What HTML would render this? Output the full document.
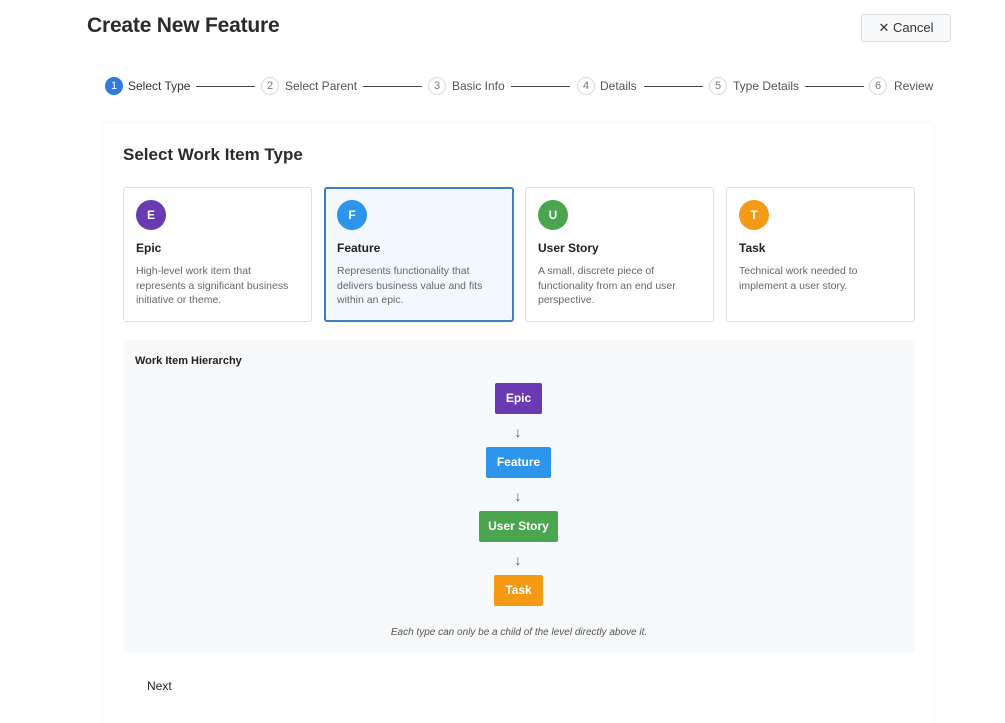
<!DOCTYPE html>
<html><head><meta charset="utf-8"><style>
*{box-sizing:border-box;margin:0;padding:0}
body{width:1005px;height:713px;background:#fff;font-family:"Liberation Sans",sans-serif;color:#333;position:relative;overflow:hidden}
.a{position:absolute}
h1{position:absolute;left:87px;top:14px;font-size:21px;font-weight:bold;color:#2b2b2b;letter-spacing:-0.2px}
.cancel{left:861px;top:14px;width:90px;height:28px;border:1px solid #d8dbe0;border-radius:3px;background:#f8f9fa;font-size:13px;color:#333;line-height:26px;text-align:center}
.st{font-size:12px;color:#555;top:79px;line-height:14px}
.c{position:absolute;top:77px;width:18px;height:18px;border-radius:50%;border:1px solid #ddd;font-size:11px;color:#777;text-align:center;line-height:16px;background:#fff}
.ln{position:absolute;top:86px;height:1px;background:#444}
.panel{left:104px;top:123px;width:830px;height:600px;background:#fff;box-shadow:0 0 3px rgba(0,0,0,0.06)}
.card{position:absolute;top:187px;width:189px;height:135px;border:1px solid #dcdfe3;border-radius:3px;background:#fff;padding:0 12px}
.card .i{position:absolute;left:12px;top:12px;width:30px;height:30px;border-radius:50%;color:#fff;font-size:12px;font-weight:bold;text-align:center;line-height:30px}
.card b{position:absolute;left:12px;top:53px;font-size:12px;color:#222}
.card p{position:absolute;left:12px;top:76px;width:160px;font-size:10.5px;line-height:14.5px;color:#666}
.hb{left:123px;top:340px;width:792px;height:313px;background:#f8f9fa;border-radius:3px}
.bx{position:absolute;height:31px;color:#fff;font-size:12px;font-weight:bold;text-align:center;line-height:31px;border-radius:2px}
.ar{position:absolute;left:512px;font-size:14px;color:#555;width:12px;text-align:center}
</style></head><body>
<h1>Create New Feature</h1>
<div class="a cancel">✕ Cancel</div>

<div class="c" style="left:105px;background:#2d7be0;border-color:#2d7be0;color:#fff">1</div>
<div class="a st" style="left:128px;color:#333">Select Type</div>
<div class="ln" style="left:196px;width:59px"></div>
<div class="c" style="left:261px">2</div>
<div class="a st" style="left:285px">Select Parent</div>
<div class="ln" style="left:363px;width:59px"></div>
<div class="c" style="left:428px">3</div>
<div class="a st" style="left:452px">Basic Info</div>
<div class="ln" style="left:511px;width:59px"></div>
<div class="c" style="left:577px">4</div>
<div class="a st" style="left:600px">Details</div>
<div class="ln" style="left:644px;width:59px"></div>
<div class="c" style="left:709px">5</div>
<div class="a st" style="left:733px">Type Details</div>
<div class="ln" style="left:805px;width:59px"></div>
<div class="c" style="left:869px">6</div>
<div class="a st" style="left:894px">Review</div>

<div class="a panel"></div>
<div class="a" style="left:123px;top:145px;font-size:17px;font-weight:bold;color:#2b2b2b">Select Work Item Type</div>

<div class="card" style="left:123px"><div class="i" style="background:#6a3ab2">E</div><b>Epic</b><p>High-level work item that represents a significant business initiative or theme.</p></div>
<div class="card" style="left:324px;width:190px;border:2px solid #3d7fc1;background:#f3f8fd"><div class="i" style="background:#2d95ec;left:11px;top:11px">F</div><b style="left:11px;top:52px">Feature</b><p style="left:11px;top:75px">Represents functionality that delivers business value and fits within an epic.</p></div>
<div class="card" style="left:525px"><div class="i" style="background:#4aa54e">U</div><b>User Story</b><p>A small, discrete piece of functionality from an end user perspective.</p></div>
<div class="card" style="left:726px"><div class="i" style="background:#f49a14">T</div><b>Task</b><p>Technical work needed to implement a user story.</p></div>

<div class="a hb"></div>
<div class="a" style="left:135px;top:355px;font-size:11px;font-weight:bold;color:#222">Work Item Hierarchy</div>
<div class="bx" style="left:495px;top:383px;width:47px;background:#6a3ab2">Epic</div>
<div class="ar" style="top:424px">↓</div>
<div class="bx" style="left:486px;top:447px;width:65px;background:#2d95ec">Feature</div>
<div class="ar" style="top:488px">↓</div>
<div class="bx" style="left:479px;top:511px;width:79px;background:#4aa54e">User Story</div>
<div class="ar" style="top:552px">↓</div>
<div class="bx" style="left:494px;top:575px;width:49px;background:#f49a14">Task</div>
<div class="a" style="left:123px;width:792px;top:627px;text-align:center;font-size:10px;font-style:italic;color:#555">Each type can only be a child of the level directly above it.</div>
<div class="a" style="left:147px;top:679px;font-size:12px;color:#222">Next</div>
</body></html>
